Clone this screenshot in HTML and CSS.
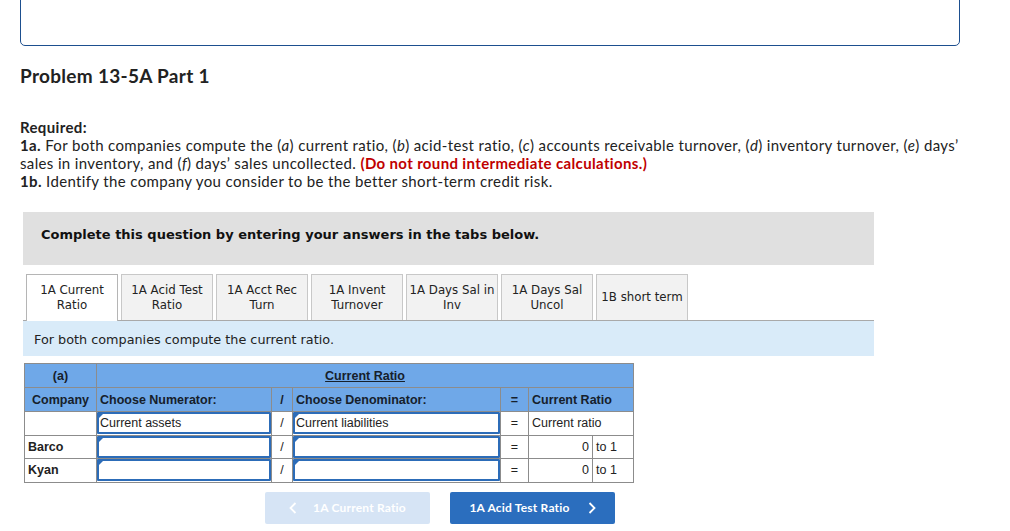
FILE: index.html
```html
<!DOCTYPE html>
<html>
<head>
<meta charset="utf-8">
<link rel="stylesheet" href="styles.css">
</head>
<body>
<div class="page">
  <div class="topbox"></div>
  <h1 class="title">Problem 13-5A Part 1</h1>
  <div class="required">
    <div class="req-head">Required:</div>
    <div><b>1a.</b> For both companies compute the (<i>a</i>) current ratio, (<i>b</i>) acid-test ratio, (<i>c</i>) accounts receivable turnover, (<i>d</i>) inventory turnover, (<i>e</i>) days’ sales in inventory, and (<i>f</i>) days’ sales uncollected. <span class="red">(Do not round intermediate calculations.)</span></div>
    <div><b>1b.</b> Identify the company you consider to be the better short-term credit risk.</div>
  </div>

  <div class="question">
    <div class="q-banner">Complete this question by entering your answers in the tabs below.</div>
    <div class="tabs">
      <div class="tab active">1A Current<br>Ratio</div>
      <div class="tab">1A Acid Test<br>Ratio</div>
      <div class="tab">1A Acct Rec<br>Turn</div>
      <div class="tab">1A Invent<br>Turnover</div>
      <div class="tab">1A Days Sal in<br>Inv</div>
      <div class="tab">1A Days Sal<br>Uncol</div>
      <div class="tab">1B short term</div>
    </div>
    <div class="info">For both companies compute the current ratio.</div>

    <table class="ratio">
      <colgroup>
        <col class="c-co"><col class="c-num"><col class="c-sl"><col class="c-den"><col class="c-eq"><col class="c-val"><col class="c-to">
      </colgroup>
      <tr class="hd">
        <th class="ctr">(a)</th>
        <th colspan="6" class="ctr"><u>Current Ratio</u></th>
      </tr>
      <tr class="hd">
        <th class="ctr">Company</th>
        <th class="lft">Choose Numerator:</th>
        <th class="ctr">/</th>
        <th class="lft">Choose Denominator:</th>
        <th class="ctr">=</th>
        <th colspan="2" class="lft">Current Ratio</th>
      </tr>
      <tr>
        <td></td>
        <td class="inp"><div class="field">Current assets</div></td>
        <td class="ctr">/</td>
        <td class="inp"><div class="field">Current liabilities</div></td>
        <td class="ctr">=</td>
        <td colspan="2">Current ratio</td>
      </tr>
      <tr>
        <td class="co">Barco</td>
        <td class="inp"><div class="field"></div></td>
        <td class="ctr">/</td>
        <td class="inp"><div class="field"></div></td>
        <td class="ctr">=</td>
        <td class="rgt">0</td>
        <td>to 1</td>
      </tr>
      <tr>
        <td class="co">Kyan</td>
        <td class="inp"><div class="field"></div></td>
        <td class="ctr">/</td>
        <td class="inp"><div class="field"></div></td>
        <td class="ctr">=</td>
        <td class="rgt">0</td>
        <td>to 1</td>
      </tr>
    </table>

    <div class="nav">
      <div class="btn disabled"><svg class="chev" width="8" height="12" viewBox="0 0 8 12"><polyline points="6.5,1 1.5,6 6.5,11" fill="none" stroke="#fff" stroke-width="1.8"/></svg><span>1A Current Ratio</span></div>
      <div class="btn primary"><span>1A Acid Test Ratio</span><svg class="chev" width="8" height="12" viewBox="0 0 8 12"><polyline points="1.5,1 6.5,6 1.5,11" fill="none" stroke="#fff" stroke-width="1.8"/></svg></div>
    </div>
  </div>
</div>
</body>
</html>
```

FILE: styles.css
```css
* { box-sizing: border-box; }
html, body { margin: 0; padding: 0; background: #fff; }
body { font-family: "Lato", "Open Sans", sans-serif; color: #222; }

.page { width: 1010px; height: 531px; overflow: hidden; padding-left: 20px; }

.topbox {
  width: 940px;
  height: 60px;
  margin-top: -14px;
  border: 1.5px solid #1d4f8f;
  border-radius: 5px;
}

.title {
  margin: 19px 0 0 0;
  font-size: 19px;
  font-weight: 700;
  line-height: 22px;
  color: #222;
  letter-spacing: 0.3px;
}

.required {
  margin-top: 31px;
  width: 950px;
  font-size: 15px;
  line-height: 18px;
  letter-spacing: 0.36px;
  color: #222;
}
.required b, .req-head { font-weight: 700; }
.red { color: #c00000; font-weight: 700; }

.question { margin-top: 22px; margin-left: 3px; width: 851px; }

.q-banner {
  background: #e0e0e0;
  height: 53px;
  padding: 15px 0 0 18px;
  font-family: "DejaVu Sans", Verdana, sans-serif;
  font-weight: 700;
  font-size: 13px;
  line-height: 16px;
  color: #111;
}

.tabs {
  display: flex;
  gap: 3px;
  padding-left: 3px;
  margin-top: 9px;
  border-bottom: 1px solid #a9a9a9;
  height: 47px;
}
.tab {
  width: 92px;
  height: 46px;
  background: #f2f2f2;
  border: 1px solid #c8c8c8;
  border-bottom: none;
  font-family: "DejaVu Sans", Verdana, sans-serif;
  font-size: 11.8px;
  line-height: 15px;
  color: #222;
  text-align: center;
  display: flex;
  align-items: center;
  justify-content: center;
}
.tab.active { background: #fff; height: 47px; margin-bottom: -1px; border-color: #b5b5b5; }

.info {
  background: #d9ebf9;
  height: 35px;
  padding: 11px 0 0 11px;
  font-family: "DejaVu Sans", Verdana, sans-serif;
  font-size: 12.8px;
  line-height: 16px;
  color: #222;
}

.ratio {
  margin-top: 7px;
  margin-left: 1px;
  border-collapse: collapse;
  font-family: "Liberation Sans", Arial, sans-serif;
  font-size: 12.5px;
  color: #222;
  table-layout: fixed;
  width: 609px;
}
.c-co { width: 72px; }
.c-num { width: 175px; }
.c-sl { width: 21px; }
.c-den { width: 208px; }
.c-eq { width: 28px; }
.c-val { width: 64px; }
.c-to { width: 41px; }

.ratio th, .ratio td {
  border: 1px solid #8c8c8c;
  padding: 0 3px;
  height: 24px;
  white-space: nowrap;
}
.ratio td { height: 23.5px; }
.ratio tr.hd th { background: #6fa8e8; font-weight: 700; color: #16202b; }
.ratio .ctr { text-align: center; }
.ratio .lft { text-align: left; }
.ratio .rgt { text-align: right; }
.ratio .co { font-weight: 700; }
.ratio td.inp { padding: 0; }
.field {
  position: relative;
  height: 22px;
  border: 2px solid #2c6cb8;
  border-radius: 1px;
  background: #fff;
  padding: 2px 0 0 1px;
  line-height: 15px;
}
.field::before {
  content: "";
  position: absolute;
  left: -1px;
  top: -1px;
  border-top: 6px solid #2c6cb8;
  border-right: 6px solid transparent;
}

.nav {
  display: flex;
  gap: 20px;
  margin-top: 9px;
  margin-left: 242px;
}
.btn {
  width: 165px;
  height: 32px;
  border-radius: 2px;
  display: flex;
  align-items: center;
  justify-content: center;
  gap: 16px;
  font-family: "Lato", sans-serif;
  font-weight: 700;
  font-size: 12px;
  letter-spacing: 0.2px;
  color: #fff;
}
.btn .chev { display: block; }
.btn.disabled { background: #d6e4f5; }
.btn.primary { background: #2b6ebe; gap: 18px; }
```
